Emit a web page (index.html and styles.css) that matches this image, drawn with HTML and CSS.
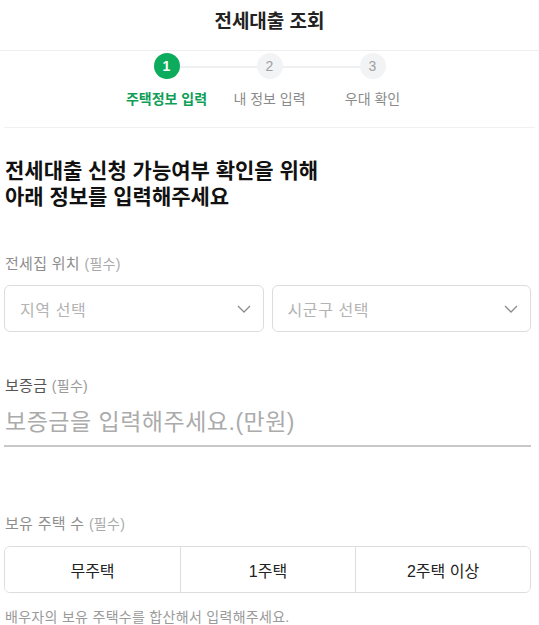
FILE: index.html
```html
<!DOCTYPE html>
<html lang="ko">
<head>
<meta charset="UTF-8" />
<title>전세대출 조회</title>
<link rel="stylesheet" href="styles.css">
</head>
<body>

<header class="topbar">
    <h1 class="topbar-title">전세대출 조회</h1>
</header>

<!-- steps -->
<div class="steps">
    <div class="step is-active">
        <span class="step-num">1</span>
        <span class="step-label">주택정보 입력</span>
    </div>
    <div class="step">
        <span class="step-num">2</span>
        <span class="step-label">내 정보 입력</span>
    </div>
    <div class="step">
        <span class="step-num">3</span>
        <span class="step-label">우대 확인</span>
    </div>
</div>

<main class="form">
    <h2 class="form-title">전세대출 신청 가능여부 확인을 위해<br>아래 정보를 입력해주세요</h2>

    <!-- location -->
    <section class="field field-location">
        <p class="field-label">전세집 위치 <em>(필수)</em></p>
        <div class="select-row">
            <button class="select" type="button">
                <span>지역 선택</span>
                <svg width="14" height="8" viewBox="0 0 14 8"><path d="M1 1l6 6 6-6" fill="none" stroke="#8c8c8c" stroke-width="1.3"/></svg>
            </button>
            <button class="select" type="button">
                <span>시군구 선택</span>
                <svg width="14" height="8" viewBox="0 0 14 8"><path d="M1 1l6 6 6-6" fill="none" stroke="#8c8c8c" stroke-width="1.3"/></svg>
            </button>
        </div>
    </section>

    <!-- deposit -->
    <section class="field field-deposit">
        <p class="field-label is-dark">보증금 <em>(필수)</em></p>
        <input class="amount" type="text" placeholder="보증금을 입력해주세요.(만원)">
    </section>

    <!-- houses -->
    <section class="field field-houses">
        <p class="field-label">보유 주택 수 <em>(필수)</em></p>
        <div class="segment">
            <button type="button">무주택</button>
            <button type="button">1주택</button>
            <button type="button">2주택 이상</button>
        </div>
        <p class="hint">배우자의 보유 주택수를 합산해서 입력해주세요.</p>
    </section>
</main>

</body>
</html>
```

FILE: styles.css
```css
/* --- Base ----------------------------------------------------------- */
body{
    margin:0;
    font-family:"Liberation Sans","Noto Sans CJK KR",sans-serif;
    background:#fff;
    color:#222;
}
p, h1, h2{ margin:0; }

/* --- Top bar -------------------------------------------------------- */
.topbar{
    height:50px;
    border-bottom:1px solid #eee;
    display:flex;
    justify-content:center;
    align-items:flex-start;
}
.topbar-title{
    margin-top:10px;
    font-size:19px;
    line-height:24px;
    font-weight:bold;
    color:#222;
}

/* --- Steps ---------------------------------------------------------- */
.steps{
    display:flex;
    justify-content:center;
    padding:2px 0 18px;
    margin:0 4px;
    border-bottom:1px solid #f0f0f0;
}
.step{
    width:103px;
    display:flex;
    flex-direction:column;
    align-items:center;
    gap:10px;
    position:relative;
}
.step + .step::before{
    content:"";
    position:absolute;
    top:13px;
    right:64px;
    width:77px;
    height:2px;
    background:#eef0f2;
}
.step-num{
    width:26px;
    height:26px;
    border-radius:50%;
    background:#f2f3f5;
    color:#a0a0a0;
    font-size:14px;
    line-height:26px;
    text-align:center;
    position:relative;
    z-index:1;
}
.step-label{
    font-size:14px;
    line-height:20px;
    color:#8a8a8a;
    white-space:nowrap;
}
.is-active .step-num{
    background:#0dab5c;
    color:#fff;
    font-weight:bold;
}
.is-active .step-label{
    color:#0f9e57;
    font-weight:bold;
}

/* --- Form ----------------------------------------------------------- */
.form{
    padding:30px 8px 0 4px;
}
.form-title{
    padding-left:1px;
    font-size:21px;
    line-height:26px;
    font-weight:bold;
    color:#111;
}
.field-label{
    padding-left:1px;
    font-size:15px;
    line-height:20px;
    letter-spacing:0.3px;
    color:#8e8e8e;
}
.field-label em{
    font-style:normal;
    font-size:14px;
    color:#aaa;
}
.field-label.is-dark{ color:#555; }
.field-label.is-dark em{ color:#999; }

.field-location{ margin-top:44px; }
.field-deposit{ margin-top:44px; }
.field-houses{ margin-top:67px; }

/* selects */
.select-row{
    display:flex;
    gap:8px;
    margin-top:11px;
}
.select{
    flex:1;
    height:47px;
    padding:0 12px 0 15px;
    border:1px solid #ddd;
    border-radius:6px;
    background:#fff;
    display:flex;
    justify-content:space-between;
    align-items:center;
    font:inherit;
    font-size:16px;
    letter-spacing:0.6px;
    color:#b3b3b3;
    cursor:pointer;
}

/* amount input */
.amount{
    display:block;
    box-sizing:border-box;
    width:100%;
    margin-top:11px;
    padding:0 0 8px 1px;
    height:40px;
    border:none;
    border-bottom:2px solid #c8c8c8;
    outline:none;
    font:inherit;
    font-size:23px;
    line-height:30px;
    letter-spacing:0.5px;
    color:#222;
}
.amount::placeholder{ color:#ababab; }

/* segmented buttons */
.segment{
    display:grid;
    grid-template-columns:repeat(3,1fr);
    margin-top:12px;
    border:1px solid #ddd;
    border-radius:6px;
    overflow:hidden;
}
.segment button{
    height:45px;
    border:none;
    background:#fff;
    font:inherit;
    font-size:16px;
    color:#222;
    cursor:pointer;
}
.segment button + button{ border-left:1px solid #ddd; }

.hint{
    margin-top:14px;
    padding-left:1px;
    font-size:14px;
    line-height:20px;
    letter-spacing:0.3px;
    color:#9a9a9a;
}
```
